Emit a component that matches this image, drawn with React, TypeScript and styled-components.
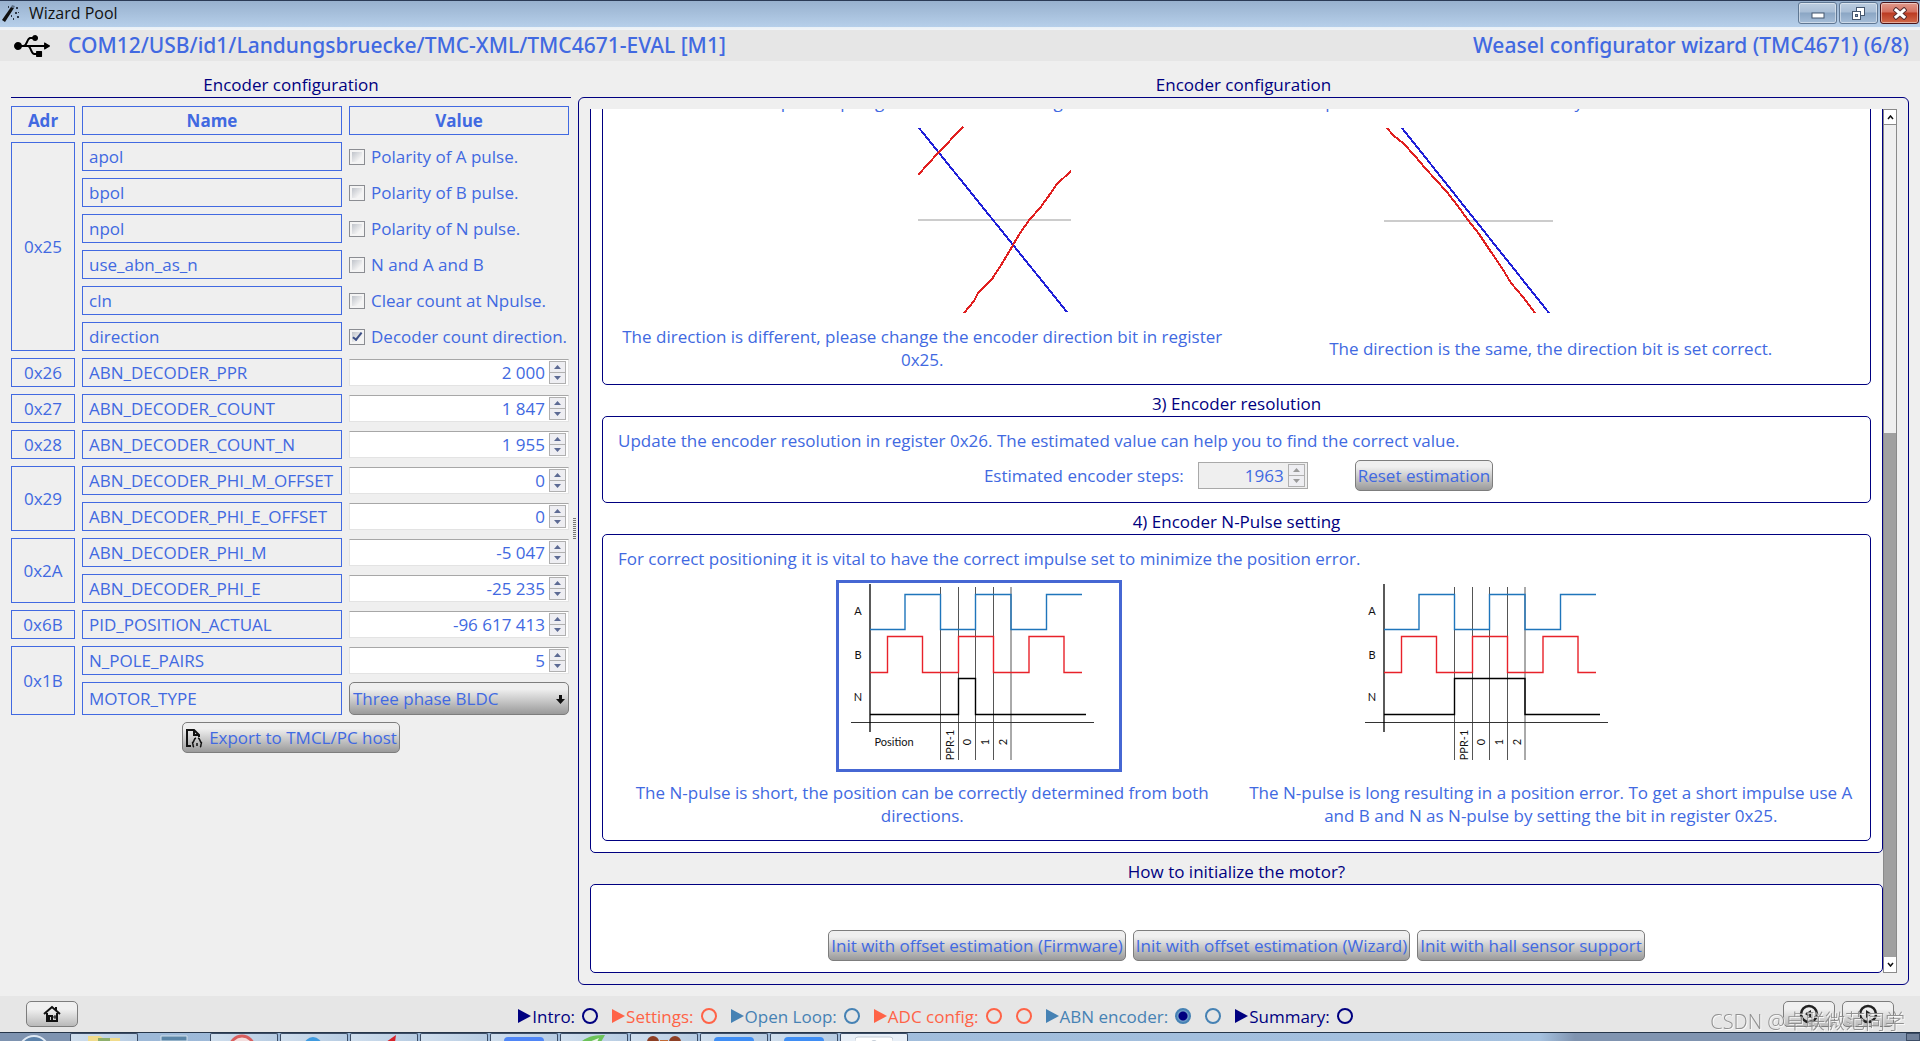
import React, { useState } from "react";
import styled, { createGlobalStyle, css } from "styled-components";
import { FaUsb } from "react-icons/fa";

const royal = "#4169e1";
const navy = "#000080";
const tomato = "#ff6347";
const steel = "#4682b4";

const GlobalStyle = createGlobalStyle`
  *, *::before, *::after { box-sizing: border-box; }
  body {
    margin: 0;
    background: #efefef;
    color: ${royal};
    font-family: "Open Sans", "Noto Sans", sans-serif;
    font-size: 17px;
    line-height: 23px;
  }
  button, input, select { font: inherit; color: inherit; margin: 0; }
`;

const Window = styled.div`
  display: flex;
  flex-direction: column;
  height: 100vh;
  overflow: hidden;
`;

/* ---------- window chrome ---------- */

const TitleBar = styled.header`
  display: flex;
  align-items: center;
  height: 30px;
  flex: none;
  padding: 0 1px 5px 2px;
  border-top: 1px solid #2b3a55;
  background: linear-gradient(#98b1ce, #b6cfea 26px, #e9f0f7 26px, #f1f4f7);
  color: #111;
  font-size: 16px;
`;

const TitleText = styled.span`
  flex: 1;
  padding-left: 9px;
`;

const WindowButtons = styled.div`
  display: flex;
  gap: 2px;
`;

const WindowButton = styled.button<{ $close?: boolean }>`
  display: grid;
  place-items: center;
  width: 39px;
  height: 22px;
  padding: 0;
  border: 1px solid ${(p) => (p.$close ? "#4c1418" : "#5f7793")};
  border-radius: 3px;
  box-shadow: inset 0 0 0 1px rgba(255, 255, 255, 0.45);
  background: ${(p) =>
    p.$close
      ? "linear-gradient(#e09a8c, #d4705f 45%, #bb3a22 50%, #d0694a)"
      : "linear-gradient(#bccde0, #a9bed6 45%, #8ba6c4 50%, #a5bdd8)"};
`;

const AppBar = styled.div`
  display: flex;
  align-items: center;
  flex: none;
  height: 31px;
  padding: 0 11px 0 14px;
  background: #e6e6e6;
  font-size: 21px;
  font-weight: 500;
  font-family: "Noto Sans", "Open Sans", sans-serif;
`;

const DevicePath = styled.h1`
  flex: 1;
  margin: 0;
  padding-left: 18px;
  font: inherit;
`;

/* ---------- main split ---------- */

const Main = styled.main`
  display: grid;
  grid-template-columns: 571px 7px minmax(0, 1fr);
  flex: 1;
  min-height: 0;
  padding: 12px 11px 11px 0;
`;

const Caption = styled.h2`
  flex: none;
  margin: 0;
  padding-bottom: 1px;
  font-size: 17px;
  font-weight: 400;
  line-height: 23px;
  text-align: center;
  color: ${navy};
`;

const LeftPane = styled.section`
  display: flex;
  flex-direction: column;
  padding-left: 11px;
`;

const LeftBody = styled.div`
  border-top: 1px solid ${navy};
  padding-top: 1px;
`;

const Splitter = styled.div`
  display: flex;
  align-items: center;
  padding: 0 0 0 2px;

  &::before {
    content: "";
    width: 3px;
    height: 22px;
    background: repeating-linear-gradient(#777 0 1px, #efefef 1px 2px);
  }
`;

const RegisterTable = styled.table`
  table-layout: fixed;
  width: 572px;
  margin-left: -7px;
  border-collapse: separate;
  border-spacing: 7px;
`;

const cell = css`
  height: 29px;
  padding: 0 6px;
  border: 1px solid ${royal};
`;

const HeadCell = styled.th`
  ${cell}
  font-weight: 700;
`;

const AddressCell = styled.td`
  ${cell}
  padding: 0;
  text-align: center;
`;

const NameCell = styled.td`
  ${cell}
`;

const ValueCell = styled.td`
  height: 29px;
  padding: 0;
`;

const CheckLabel = styled.label`
  display: flex;
  align-items: center;
  gap: 6px;
  white-space: nowrap;
`;

const CheckBox = styled.input`
  appearance: none;
  display: grid;
  place-items: center;
  width: 16px;
  height: 16px;
  border: 1px solid #8b8d92;
  background: linear-gradient(135deg, #bfc3ca, #f4f4f4 75%) content-box, #f4f4f4;
  padding: 2px;

  &:checked::before {
    content: "";
    width: 5px;
    height: 10px;
    border: solid #3c4f86;
    border-width: 0 2px 2px 0;
    transform: rotate(38deg) translate(-1px, -1px);
  }
`;

const SpinFrame = styled.div<{ $muted?: boolean }>`
  display: flex;
  align-items: center;
  height: 27px;
  padding-right: 2px;
  border: 1px solid #e3e3e3;
  border-top-color: #a7a7a7;
  background: #fff;
  ${(p) =>
    p.$muted &&
    css`
      width: 110px;
      border-color: #a9a9a9;
      background: #efefef;
    `}
`;

const SpinInput = styled.input`
  flex: 1;
  min-width: 0;
  height: 23px;
  padding: 0 4px 0 2px;
  border: 0;
  background: transparent;
  text-align: right;
`;

const SpinButtons = styled.div`
  display: grid;
  width: 17px;
  height: 23px;
  border: 1px solid #b0b0b0;
`;

const SpinButton = styled.button`
  display: grid;
  place-items: center;
  padding: 0;
  border: 0;
  background: #eeeef2;

  &:first-child { border-bottom: 1px solid #b0b0b0; }
`;

const raised = css`
  border: 1px solid #7d7d7d;
  border-radius: 5px;
  background: linear-gradient(#efefef 20%, #9a9a9a);
  color: ${royal};
`;

const Button = styled.button`
  ${raised}
  display: inline-flex;
  align-items: center;
  justify-content: center;
  gap: 6px;
  height: 31px;
  padding: 0 2px;
  white-space: nowrap;
`;

const IconButton = styled(Button)`
  width: 52px;
  height: 26px;
  background: linear-gradient(#f0f0f0 30%, #b9b9b9);
`;

const SelectFrame = styled.div`
  ${raised}
  display: grid;
  align-items: center;
  height: 33px;

  & > * { grid-area: 1 / 1; }
  svg { justify-self: end; margin-right: 3px; pointer-events: none; }
`;

const Select = styled.select`
  appearance: none;
  width: 100%;
  height: 31px;
  padding: 0 20px 0 3px;
  border: 0;
  background: transparent;
`;

const ExportRow = styled.div`
  display: flex;
  justify-content: center;
`;

/* ---------- right side ---------- */

const RightPane = styled.section`
  display: flex;
  flex-direction: column;
  min-height: 0;
`;

const Frame = styled.div`
  display: flex;
  flex: 1;
  min-height: 0;
  padding: 11px;
  border: 1px solid ${navy};
  border-radius: 6px;
`;

const Scroller = styled.div`
  display: flex;
  flex-direction: column-reverse;
  flex: 1;
  min-width: 0;
  overflow-x: hidden;
  overflow-y: auto;
  scrollbar-width: none;
`;

const Page = styled.div`
  flex: none;
`;

const Group = styled.section`
  padding: 11px;
  border: 1px solid ${navy};
  border-radius: 5px;
  background: #fff;
`;

const SubCaption = styled(Caption)`
  padding-top: 7px;
`;

const Hint = styled.p`
  margin: 0;
  padding: 1px 4px 3px;
  white-space: nowrap;
`;

const Pair = styled.div`
  display: grid;
  grid-template-columns: 1fr 1fr;
  align-items: center;
  column-gap: 12px;
  padding-bottom: 2px;
  text-align: center;
`;

const Figure = styled.div<{ $inset: number }>`
  padding: 7px 0 9px ${(p) => p.$inset}px;
  text-align: left;

  svg { display: block; }
`;

const Note = styled.p`
  margin: 0;
`;

const Choice = styled.button<{ $on?: boolean }>`
  display: block;
  padding: 0;
  border: 3px solid ${(p) => (p.$on ? "#4667d3" : "transparent")};
  background: #fff;
`;

const EstimateRow = styled.div`
  display: flex;
  align-items: center;
  justify-content: center;
  padding: 5px 0 0 4px;

  label { padding-right: 14px; }
  ${Button} { margin-left: 47px; }
`;

const InitRow = styled.div`
  display: flex;
  justify-content: center;
  gap: 7px;
  padding-top: 34px;
`;

const ScrollBar = styled.div`
  display: flex;
  flex-direction: column;
  flex: none;
  width: 14px;
  border: 1px solid #8a8a8a;
  background: #efefef;
`;

const ScrollButton = styled.button`
  display: grid;
  place-items: center;
  flex: none;
  height: 15px;
  padding: 0;
  border: 0;
  background: #fff;

  &:first-child { border-bottom: 1px solid #8a8a8a; }
`;

const Track = styled.div`
  display: flex;
  flex: 1;
  align-items: flex-end;
`;

const Thumb = styled.div`
  width: 100%;
  height: 63%;
  background: #a0a0a0;
`;

/* ---------- footer ---------- */

const Footer = styled.footer`
  display: flex;
  align-items: center;
  justify-content: space-between;
  flex: none;
  height: 36px;
  padding: 0 26px;
  background: #e6e6e6;
`;

const Steps = styled.nav`
  display: flex;
  gap: 14px;
  padding: 4px 0 0 10px;
`;

const Step = styled.div<{ $color: string }>`
  display: flex;
  align-items: center;
  color: ${(p) => p.$color};

  svg { margin-right: 1px; }
`;

const StepDot = styled.input<{ $color: string }>`
  appearance: none;
  width: 16px;
  height: 16px;
  border: 2px solid ${(p) => p.$color};
  border-radius: 50%;

  && { margin-left: 7px; }
  & + && { margin-left: 14px; }

  &:checked { background: radial-gradient(${navy} 4px, #6f9cc8 5px); }
`;

const Pager = styled.div`
  display: flex;
  justify-content: flex-end;
  gap: 7px;
`;

const Watermark = styled.div`
  position: fixed;
  right: 15px;
  bottom: 5px;
  color: rgba(140, 140, 140, 0.95);
  font-family: "Open Sans", "Noto Sans CJK SC", sans-serif;
  font-size: 20px;
  font-weight: 300;
  line-height: 28px;
  text-shadow: 1px 1px 0 rgba(255, 255, 255, 0.75);
  pointer-events: none;
`;

const TaskBar = styled.div`
  display: flex;
  flex: none;
  gap: 2px;
  height: 9px;
  overflow: hidden;
  border-top: 1px solid #26364a;
  background: linear-gradient(90deg, #7e93b0 70px, #9db9d8 140px, #a5c1df 1540px, #8094b0 1575px);
`;

const Task = styled.div<{ $kind?: "plain" | "active" }>`
  display: flex;
  justify-content: center;
  width: 68px;
  border: ${(p) => (p.$kind === "plain" ? "0" : "1px solid #3c4d66")};
  border-bottom: 0;
  border-radius: 2px 2px 0 0;
  background: ${(p) =>
    p.$kind === "plain"
      ? "transparent"
      : p.$kind === "active"
        ? "#e8eff7"
        : "linear-gradient(90deg, #cfdeed, #b7cce2)"};
`;

const Desktop = styled.div`
  width: 14px;
  margin-left: auto;
  border: 1px solid #3c4d66;
  background: #71819a;
`;

/* ---------- data ---------- */

type Field =
  | { name: string; kind: "check"; text: string; on?: boolean }
  | { name: string; kind: "spin"; value: string }
  | { name: string; kind: "select"; value: string };

const registers: { adr: string; fields: Field[] }[] = [
  {
    adr: "0x25",
    fields: [
      { name: "apol", kind: "check", text: "Polarity of A pulse." },
      { name: "bpol", kind: "check", text: "Polarity of B pulse." },
      { name: "npol", kind: "check", text: "Polarity of N pulse." },
      { name: "use_abn_as_n", kind: "check", text: "N and A and B" },
      { name: "cln", kind: "check", text: "Clear count at Npulse." },
      { name: "direction", kind: "check", text: "Decoder count direction.", on: true },
    ],
  },
  { adr: "0x26", fields: [{ name: "ABN_DECODER_PPR", kind: "spin", value: "2 000" }] },
  { adr: "0x27", fields: [{ name: "ABN_DECODER_COUNT", kind: "spin", value: "1 847" }] },
  { adr: "0x28", fields: [{ name: "ABN_DECODER_COUNT_N", kind: "spin", value: "1 955" }] },
  {
    adr: "0x29",
    fields: [
      { name: "ABN_DECODER_PHI_M_OFFSET", kind: "spin", value: "0" },
      { name: "ABN_DECODER_PHI_E_OFFSET", kind: "spin", value: "0" },
    ],
  },
  {
    adr: "0x2A",
    fields: [
      { name: "ABN_DECODER_PHI_M", kind: "spin", value: "-5 047" },
      { name: "ABN_DECODER_PHI_E", kind: "spin", value: "-25 235" },
    ],
  },
  { adr: "0x6B", fields: [{ name: "PID_POSITION_ACTUAL", kind: "spin", value: "-96 617 413" }] },
  {
    adr: "0x1B",
    fields: [
      { name: "N_POLE_PAIRS", kind: "spin", value: "5" },
      { name: "MOTOR_TYPE", kind: "select", value: "Three phase BLDC" },
    ],
  },
];

const steps = [
  { text: "Intro:", color: navy, dots: 1 },
  { text: "Settings:", color: tomato, dots: 1 },
  { text: "Open Loop:", color: steel, dots: 1 },
  { text: "ADC config:", color: tomato, dots: 2 },
  { text: "ABN encoder:", color: steel, dots: 2 },
  { text: "Summary:", color: navy, dots: 1 },
];

/* ---------- parts ---------- */

function Spin({ label, value, muted, id }: { label: string; value: string; muted?: boolean; id?: string }) {
  const [text, setText] = useState(value);
  const arrow = muted ? "#9a9a9a" : "#5c6a94";
  return (
    <SpinFrame $muted={muted}>
      <SpinInput id={id} aria-label={label} value={text} readOnly={muted} onChange={(e) => setText(e.target.value)} />
      <SpinButtons>
        <SpinButton type="button" aria-label={`Increase ${label}`}>
          <svg width="7" height="4"><path d="M0 4L3.500 0L7 4Z" fill={arrow} /></svg>
        </SpinButton>
        <SpinButton type="button" aria-label={`Decrease ${label}`}>
          <svg width="7" height="4"><path d="M0 0L3.500 4L7 0Z" fill={arrow} /></svg>
        </SpinButton>
      </SpinButtons>
    </SpinFrame>
  );
}

function Value({ field }: { field: Field }) {
  if (field.kind === "check") {
    return (
      <CheckLabel>
        <CheckBox type="checkbox" defaultChecked={field.on} />
        {field.text}
      </CheckLabel>
    );
  }
  if (field.kind === "spin") return <Spin label={field.name} value={field.value} />;
  return (
    <SelectFrame>
      <Select aria-label={field.name} defaultValue={field.value}>
        <option>{field.value}</option>
      </Select>
      <svg width="9" height="13" viewBox="0 0 9 13">
        <path d="M3 3H6V7H9L4.500 12L0 7H3Z" fill="#111" />
      </svg>
    </SelectFrame>
  );
}

function AnglePlot({ blue, red, zero, width }: { blue: string; red: string[]; zero: number; width: number }) {
  return (
    <svg width={width} height="193" viewBox={`0 2 ${width} 193`} fill="none" strokeWidth="2" shapeRendering="crispEdges">
      <path d={`M0 ${zero}H${width}`} stroke="#cccccc" />
      <path d={blue} stroke="#2020d8" />
      {red.map((d) => (
        <path key={d} d={d} stroke="#e02020" />
      ))}
    </svg>
  );
}

function PulseChart({ index, caption }: { index: string; caption?: boolean }) {
  return (
    <svg width="280" height="186" fill="none" fontFamily="Lato, sans-serif" fontSize="11">
      <g stroke="#555" strokeWidth="1">
        {[101.5, 119.5, 136.5, 154.5, 172].map((x) => (
          <path key={x} d={`M${x} 4V177`} />
        ))}
        <path d="M12 139.500H255" stroke="#333" />
      </g>
      <path d="M31 1V149" stroke="#000" strokeWidth="1.300" />
      <path d="M31 46.500H66V11.500H101.500V46.500H136.500V11.500H172V46.500H207.500V11.500H243" stroke="#1f75bb" strokeWidth="1.400" />
      <path d="M31 89.500H48.500V53.500H83.500V89.500H119.500V53.500H154.500V89.500H190V53.500H225V89.500H243" stroke="#e8222a" strokeWidth="1.400" />
      <path d={index} stroke="#000" strokeWidth="1.400" />
      <g fill="#111" textAnchor="middle">
        <text x="19" y="32">A</text>
        <text x="19" y="76">B</text>
        <text x="19" y="118">N</text>
        {caption && <text x="55" y="163">Position</text>}
        <text transform="translate(115 162) rotate(-90)">PPR-1</text>
        <text transform="translate(132 159) rotate(-90)">0</text>
        <text transform="translate(150 159) rotate(-90)">1</text>
        <text transform="translate(168 159) rotate(-90)">2</text>
      </g>
    </svg>
  );
}

function WandIcon() {
  return (
    <svg width="18" height="20" viewBox="0 0 18 20">
      <path d="M0 17L9 4L12 5L3 19Z" fill="#111" />
      <path d="M9 4L10 2L13 3L12 5Z" fill="#5c6f86" />
      <g fill="#2b3646">
        <path d="M14 4H16V6H14ZM13 9H15V11H13ZM15 13H17V15H15ZM9 12H10V14H9ZM6 3H7V5H6ZM16 9H17V10H16ZM11 15H12V17H11Z" />
      </g>
    </svg>
  );
}

function PagerIcon({ d }: { d: string }) {
  return (
    <svg width="20" height="20" viewBox="0 0 20 20">
      <circle cx="10" cy="10" r="8" fill="none" stroke="#222" strokeWidth="2.500" />
      <path d={d} fill="#222" />
    </svg>
  );
}

function LeftSide() {
  return (
    <LeftPane>
      <Caption>Encoder configuration</Caption>
      <LeftBody>
        <RegisterTable>
          <colgroup>
            <col style={{ width: 64 }} />
            <col style={{ width: 260 }} />
            <col style={{ width: 220 }} />
          </colgroup>
          <thead>
            <tr>
              <HeadCell>Adr</HeadCell>
              <HeadCell>Name</HeadCell>
              <HeadCell>Value</HeadCell>
            </tr>
          </thead>
          <tbody>
            {registers.map((reg) =>
              reg.fields.map((field, i) => (
                <tr key={field.name}>
                  {i === 0 && <AddressCell rowSpan={reg.fields.length}>{reg.adr}</AddressCell>}
                  <NameCell>{field.name}</NameCell>
                  <ValueCell>
                    <Value field={field} />
                  </ValueCell>
                </tr>
              )),
            )}
          </tbody>
        </RegisterTable>
        <ExportRow>
          <Button type="button">
            <svg width="18" height="20" viewBox="0 0 18 20" fill="none" stroke="#111" strokeWidth="2">
              <path d="M6 18H2V2H9L14 7V9M9 2V7H14" />
              <path d="M11 10C8 11 10 14 7 15C9 15 7 18 9 19M13 10C16 11 14 14 17 15C15 15 17 18 15 19M12 15V18" strokeWidth="1.500" />
            </svg>
            Export to TMCL/PC host
          </Button>
        </ExportRow>
      </LeftBody>
    </LeftPane>
  );
}

function RightSide() {
  return (
    <RightPane>
      <Caption>Encoder configuration</Caption>
      <Frame>
        <Scroller>
          <Page>
            <Group>
              <Group>
                <Hint>
                  Turn a motor in an open loop angle mode with a turning curve of an encoder and its own position in relation to their delay.
                </Hint>
                <Pair>
                  <Figure $inset={304}>
                    <AnglePlot
                      width={153}
                      zero={99}
                      blue="M1 7L149 191"
                      red={[
                        "M0 54L10 43L20 32L28 24L36 15L45 6",
                        "M153 50L139 63L130 76L122 87L112 98L102 112L95 124L85 141L74 158L60 172L56 180L46 192",
                      ]}
                    />
                  </Figure>
                  <Figure $inset={141}>
                    <AnglePlot
                      width={169}
                      zero={100}
                      blue="M18 7L165 192"
                      red={["M3 7L9 14L20 23L31 35L41 47L52 59L63 71L73 84L84 99L95 113L105 128L118 147L127 162L139 176L151 192"]}
                    />
                  </Figure>
                  <Note>The direction is different, please change the encoder direction bit in register 0x25.</Note>
                  <Note>The direction is the same, the direction bit is set correct.</Note>
                </Pair>
              </Group>
              <SubCaption>3) Encoder resolution</SubCaption>
              <Group>
                <Hint>
                  Update the encoder resolution in register 0x26. The estimated value can help you to find the correct value.
                </Hint>
                <EstimateRow>
                  <label htmlFor="steps">Estimated encoder steps:</label>
                  <Spin id="steps" label="Estimated encoder steps" value="1963" muted />
                  <Button type="button">Reset estimation</Button>
                </EstimateRow>
              </Group>
              <SubCaption>4) Encoder N-Pulse setting</SubCaption>
              <Group>
                <Hint>For correct positioning it is vital to have the correct impulse set to minimize the position error.</Hint>
                <Pair>
                  <Figure $inset={222}>
                    <Choice type="button" $on aria-label="Short N-pulse">
                      <PulseChart caption index="M31 131.500H119.500V95.500H136.500V131.500H247" />
                    </Choice>
                  </Figure>
                  <Figure $inset={107}>
                    <Choice type="button" aria-label="Long N-pulse">
                      <PulseChart index="M31 131.500H101.500V95.500H172V131.500H247" />
                    </Choice>
                  </Figure>
                  <Note>The N-pulse is short, the position can be correctly determined from both directions.</Note>
                  <Note>
                    The N-pulse is long resulting in a position error. To get a short impulse use A and B and N as N-pulse by setting the bit in register 0x25.
                  </Note>
                </Pair>
              </Group>
            </Group>
            <SubCaption>How to initialize the motor?</SubCaption>
            <Group>
              <InitRow>
                <Button type="button">Init with offset estimation (Firmware)</Button>
                <Button type="button">Init with offset estimation (Wizard)</Button>
                <Button type="button">Init with hall sensor support</Button>
              </InitRow>
            </Group>
          </Page>
        </Scroller>
        <ScrollBar>
          <ScrollButton type="button" aria-label="Scroll up">
            <svg width="7" height="5"><path d="M1 4L3.500 1L6 4" fill="none" stroke="#111" strokeWidth="1.500" /></svg>
          </ScrollButton>
          <Track>
            <Thumb />
          </Track>
          <ScrollButton type="button" aria-label="Scroll down">
            <svg width="7" height="5"><path d="M1 1L3.500 4L6 1" fill="none" stroke="#111" strokeWidth="1.500" /></svg>
          </ScrollButton>
        </ScrollBar>
      </Frame>
    </RightPane>
  );
}

function BottomBar() {
  return (
    <Footer>
      <IconButton type="button" aria-label="Home">
        <svg width="18" height="18" viewBox="0 0 18 18" fill="none" stroke="#111" strokeWidth="2">
          <path d="M1 9L9 2L17 9" />
          <path d="M4 8V16H14V8" />
          <path d="M13 2V5M6 16V11H9V16" />
          <path d="M11 11H13V13H11Z" strokeWidth="1" />
        </svg>
      </IconButton>
      <Steps>
        {steps.map((s) => (
          <Step key={s.text} $color={s.color}>
            <svg width="13" height="14"><path d="M0 0L13 7L0 14Z" fill={s.color} /></svg>
            {s.text}
            {Array.from({ length: s.dots }, (_, i) => (
              <StepDot
                key={i}
                type="radio"
                name="step"
                aria-label={`${s.text} ${i + 1}`}
                $color={s.color}
                defaultChecked={s.text === "ABN encoder:" && i === 0}
              />
            ))}
          </Step>
        ))}
      </Steps>
      <Pager>
        <IconButton type="button" aria-label="Back">
          <PagerIcon d="M12 6V14L6 10Z" />
        </IconButton>
        <IconButton type="button" aria-label="Next">
          <PagerIcon d="M8 6V14L14 10Z" />
        </IconButton>
      </Pager>
    </Footer>
  );
}

function Tasks() {
  return (
    <TaskBar>
      <Task $kind="plain">
        <svg width="32" height="8"><circle cx="16" cy="18" r="15" fill="#5d83ab" stroke="#dfe9f4" strokeWidth="2" /></svg>
      </Task>
      <Task>
        <svg width="36" height="8"><path d="M2 2H14L17 4H34V8H2Z" fill="#f1dc8c" /><path d="M12 4H24V8H12Z" fill="#8fb06c" /></svg>
      </Task>
      <Task $kind="plain">
        <svg width="30" height="8"><path d="M2 3H28V8H2Z" fill="#5b86a8" stroke="#cfdeea" /></svg>
      </Task>
      <Task>
        <svg width="32" height="8"><circle cx="14" cy="14" r="12" fill="#f4dede" stroke="#d95f5f" strokeWidth="3" /></svg>
      </Task>
      <Task>
        <svg width="32" height="8"><circle cx="15" cy="12" r="9" fill="#3f9be0" /></svg>
      </Task>
      <Task>
        <svg width="32" height="8"><path d="M18 8L28 1L27 8Z" fill="#d8232a" /></svg>
      </Task>
      <Task />
      <Task>
        <svg width="40" height="8"><rect y="3" width="40" height="12" rx="4" fill="#4f86f7" /></svg>
      </Task>
      <Task>
        <svg width="34" height="8"><path d="M4 8C10 2 20 1 28 1L24 8Z" fill="#6cc35a" /><path d="M12 8L22 4L20 8Z" fill="#e9f4e6" /></svg>
      </Task>
      <Task>
        <svg width="40" height="8"><circle cx="9" cy="8" r="6" fill="#8e3f24" /><circle cx="31" cy="8" r="6" fill="#8e3f24" /><path d="M16 6H24V8H16Z" fill="#c46a34" /></svg>
      </Task>
      <Task>
        <svg width="40" height="8"><rect y="3" width="40" height="12" rx="4" fill="#3f8ef5" /></svg>
      </Task>
      <Task>
        <svg width="40" height="8"><rect y="3" width="40" height="12" rx="4" fill="#3f8ef5" /></svg>
      </Task>
      <Task $kind="active">
        <svg width="38" height="8"><rect y="3" width="38" height="12" rx="3" fill="#fff" stroke="#c4ccd6" /><circle cx="19" cy="9" r="3" fill="#c4ccd6" /></svg>
      </Task>
      <Desktop />
    </TaskBar>
  );
}

export default function App() {
  return (
    <Window>
      <GlobalStyle />
      <TitleBar>
        <WandIcon />
        <TitleText>Wizard Pool</TitleText>
        <WindowButtons>
          <WindowButton type="button" aria-label="Minimize">
            <svg width="14" height="12"><rect x="1" y="6" width="12" height="5" fill="#fff" stroke="#45566e" /></svg>
          </WindowButton>
          <WindowButton type="button" aria-label="Restore">
            <svg width="15" height="15" fill="#fff" stroke="#45566e">
              <rect x="5.500" y="1.500" width="8" height="8" />
              <rect x="1.500" y="5.500" width="8" height="8" />
              <rect x="4.500" y="8.500" width="2" height="2" fill="#8ba6c4" />
            </svg>
          </WindowButton>
          <WindowButton type="button" aria-label="Close" $close>
            <svg width="14" height="13" fill="none" strokeLinecap="square">
              <path d="M3 3L11 10M11 3L3 10" stroke="#5a3030" strokeWidth="5" />
              <path d="M3 3L11 10M11 3L3 10" stroke="#fff" strokeWidth="3" />
            </svg>
          </WindowButton>
        </WindowButtons>
      </TitleBar>
      <AppBar>
        <FaUsb size={36} color="#000" />
        <DevicePath>COM12/USB/id1/Landungsbruecke/TMC-XML/TMC4671-EVAL [M1]</DevicePath>
        <span>Weasel configurator wizard (TMC4671) (6/8)</span>
      </AppBar>
      <Main>
        <LeftSide />
        <Splitter />
        <RightSide />
      </Main>
      <BottomBar />
      <Tasks />
      <Watermark>CSDN @卓联微范同学</Watermark>
    </Window>
  );
}
